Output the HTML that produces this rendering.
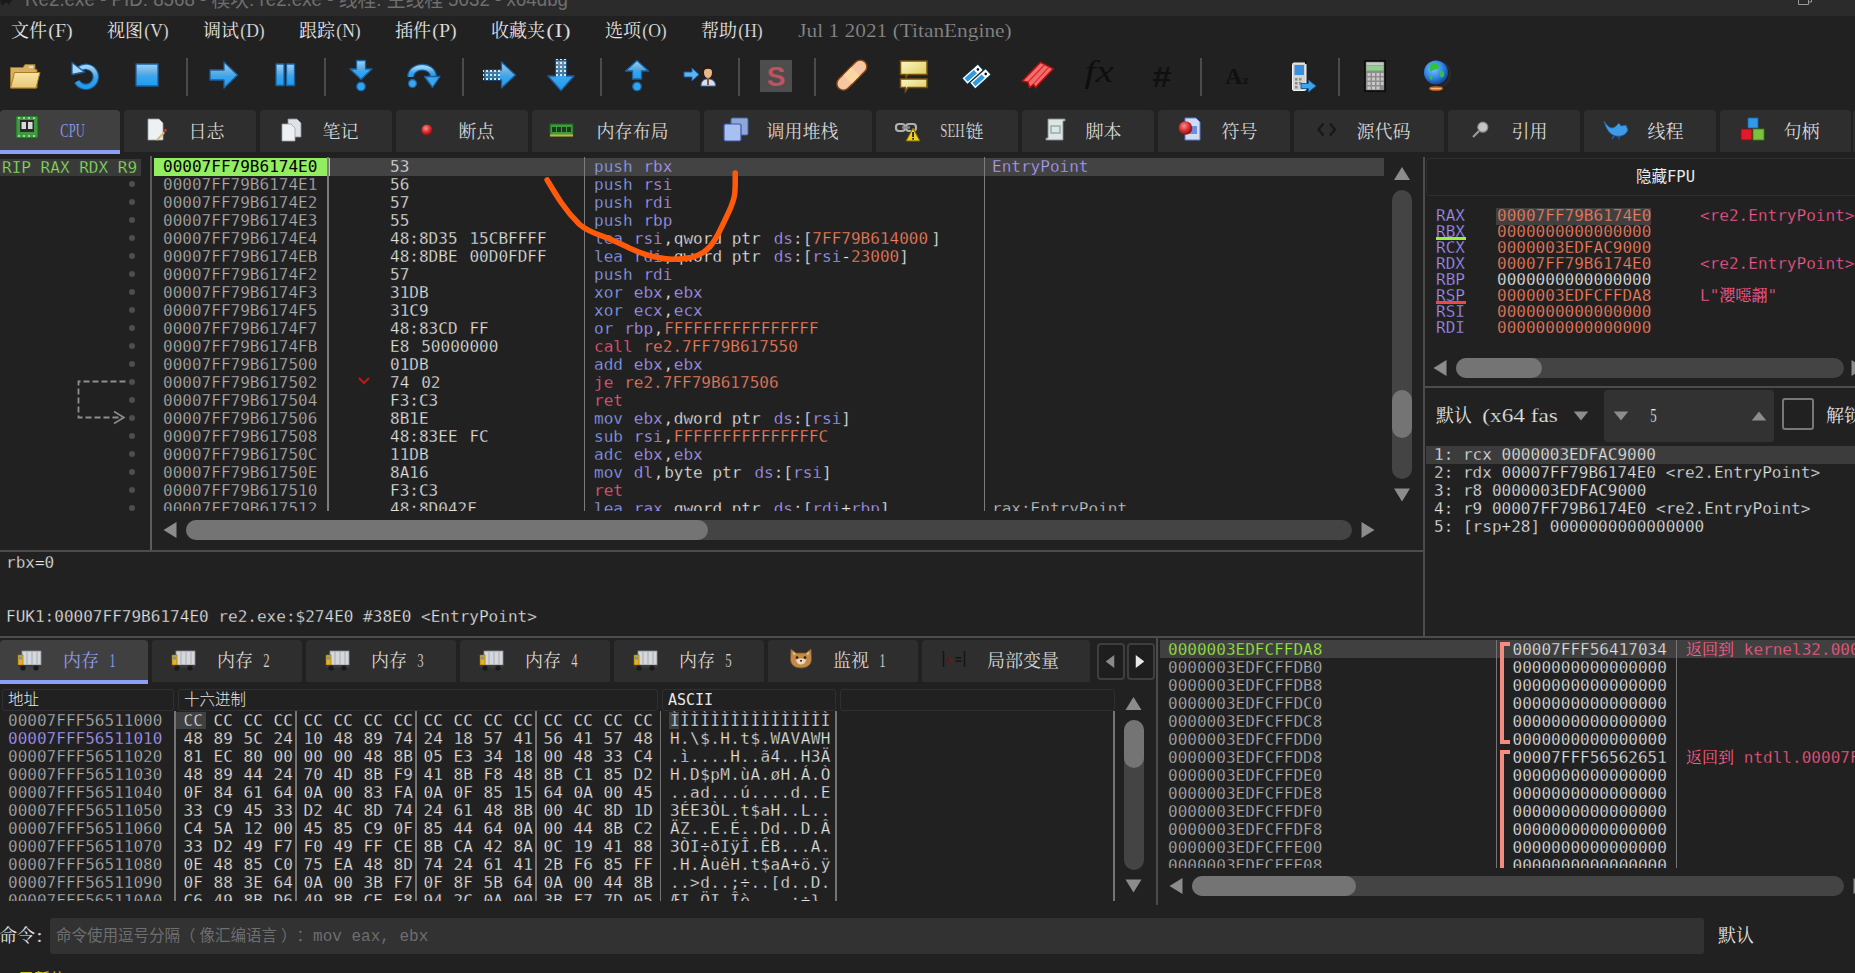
<!DOCTYPE html>
<html lang="zh"><head><meta charset="utf-8"><title>x64dbg</title>
<style>
*{box-sizing:border-box;margin:0;padding:0}
html,body{width:1855px;height:973px;overflow:hidden;background:#212121}
body{position:relative;font-family:"Liberation Sans","Noto Sans CJK SC",sans-serif;color:#e0e0e0}
.a{position:absolute}
.m{font-family:"DejaVu Sans Mono","Liberation Mono","Noto Serif CJK SC",monospace;font-size:16.05px;white-space:pre;line-height:18px;letter-spacing:0;margin-top:1px;-webkit-text-stroke:0.3px #212121}
.ui{font-family:"Liberation Serif","Noto Serif CJK SC",serif;font-size:18px;white-space:pre}
.ui i{font-style:normal;font-family:"Liberation Mono",monospace;font-size:15px;display:inline-block;transform:scaleY(1.12);transform-origin:50% 70%}
.tab{position:absolute;top:110px;height:42px;background:#2e2e2e;border-radius:4px 4px 0 0}
.tab .t{position:absolute;top:9px;color:#d6d6d6}
.tab.sel{background:#404040;border-bottom:4px solid #8c9ef5;height:44px}
.tab.sel .t{color:#8c9ef5}
.row{position:absolute;left:0;height:18px}
.vl{position:absolute;width:2px;background:#6c6c6c}
.hl{position:absolute;height:2px;background:#4c4c4c}
.mn{color:#90a3fc}.rg{color:#b09efc}.im{color:#f88060}.cj{color:#f85c80}.wh{color:#ececec}
.gr{color:#a6a6a6}.mn,.cj{margin-right:1.200px}.cm{color:#ececec;margin:0 0.700px}
.trk{position:absolute;background:#444;border-radius:10px}
.thb{position:absolute;background:#747474;border-radius:10px}
.hdr{position:absolute;top:689px;height:22px;border:1px solid #2f2f33;border-radius:3px;font-size:15.5px;line-height:19px;padding-left:5px;color:#e8e8e8;white-space:pre;font-weight:300}
</style></head><body>

<div class="a" style="left:0;top:0;width:1855px;height:16px;background:#2b2b2b;overflow:hidden">
<div class="a" style="left:25px;top:-13px;font-size:21px;line-height:24px;transform:scaleX(0.893);transform-origin:0 0;color:#6f6f6f;white-space:pre;font-family:'Liberation Sans','Noto Sans CJK SC',sans-serif">Re2.exe - PID: 8568 - 模块: re2.exe - 线程: 主线程 5032 - x64dbg</div>
<svg class="a" style="left:0;top:0" width="16" height="8"><path d="M0 0 L12 0 L9 5 L6 2 L2 6 Z" fill="#1a1a1a"/></svg>
<svg class="a" style="left:1797px;top:0" width="16" height="8"><path d="M1.5 0 V4.5 H11.5 V0 M11.5 2 H14.5 V0" fill="none" stroke="#9a9a9a" stroke-width="1"/></svg>
</div>
<div class="a" style="left:11px;top:17px;height:26px;width:65.0px;"><div class="a ui" style="left:0px;top:1px;line-height:26px;color:#e4e4e4;font-size:18px">文件</div><svg class="a" style="left:36.0px;top:0;overflow:visible" width="27.0" height="26"><text x="1.300" y="19.5" textLength="24.4" lengthAdjust="spacingAndGlyphs" font-family="Liberation Serif,serif" font-size="18" fill="#e4e4e4" stroke="#212121" stroke-width="0.18" xml:space="preserve">(F)</text></svg></div>
<div class="a" style="left:107px;top:17px;height:26px;width:65.0px;"><div class="a ui" style="left:0px;top:1px;line-height:26px;color:#e4e4e4;font-size:18px">视图</div><svg class="a" style="left:36.0px;top:0;overflow:visible" width="27.0" height="26"><text x="1.300" y="19.5" textLength="24.4" lengthAdjust="spacingAndGlyphs" font-family="Liberation Serif,serif" font-size="18" fill="#e4e4e4" stroke="#212121" stroke-width="0.18" xml:space="preserve">(V)</text></svg></div>
<div class="a" style="left:203px;top:17px;height:26px;width:65.0px;"><div class="a ui" style="left:0px;top:1px;line-height:26px;color:#e4e4e4;font-size:18px">调试</div><svg class="a" style="left:36.0px;top:0;overflow:visible" width="27.0" height="26"><text x="1.300" y="19.5" textLength="24.4" lengthAdjust="spacingAndGlyphs" font-family="Liberation Serif,serif" font-size="18" fill="#e4e4e4" stroke="#212121" stroke-width="0.18" xml:space="preserve">(D)</text></svg></div>
<div class="a" style="left:299px;top:17px;height:26px;width:65.0px;"><div class="a ui" style="left:0px;top:1px;line-height:26px;color:#e4e4e4;font-size:18px">跟踪</div><svg class="a" style="left:36.0px;top:0;overflow:visible" width="27.0" height="26"><text x="1.300" y="19.5" textLength="24.4" lengthAdjust="spacingAndGlyphs" font-family="Liberation Serif,serif" font-size="18" fill="#e4e4e4" stroke="#212121" stroke-width="0.18" xml:space="preserve">(N)</text></svg></div>
<div class="a" style="left:395px;top:17px;height:26px;width:65.0px;"><div class="a ui" style="left:0px;top:1px;line-height:26px;color:#e4e4e4;font-size:18px">插件</div><svg class="a" style="left:36.0px;top:0;overflow:visible" width="27.0" height="26"><text x="1.300" y="19.5" textLength="24.4" lengthAdjust="spacingAndGlyphs" font-family="Liberation Serif,serif" font-size="18" fill="#e4e4e4" stroke="#212121" stroke-width="0.18" xml:space="preserve">(P)</text></svg></div>
<div class="a" style="left:491px;top:17px;height:26px;width:83.0px;"><div class="a ui" style="left:0px;top:1px;line-height:26px;color:#e4e4e4;font-size:18px">收藏夹</div><svg class="a" style="left:54.0px;top:0;overflow:visible" width="27.0" height="26"><text x="1.300" y="19.5" textLength="24.4" lengthAdjust="spacingAndGlyphs" font-family="Liberation Serif,serif" font-size="18" fill="#e4e4e4" stroke="#212121" stroke-width="0.18" xml:space="preserve">(I)</text></svg></div>
<div class="a" style="left:605px;top:17px;height:26px;width:65.0px;"><div class="a ui" style="left:0px;top:1px;line-height:26px;color:#e4e4e4;font-size:18px">选项</div><svg class="a" style="left:36.0px;top:0;overflow:visible" width="27.0" height="26"><text x="1.300" y="19.5" textLength="24.4" lengthAdjust="spacingAndGlyphs" font-family="Liberation Serif,serif" font-size="18" fill="#e4e4e4" stroke="#212121" stroke-width="0.18" xml:space="preserve">(O)</text></svg></div>
<div class="a" style="left:701px;top:17px;height:26px;width:65.0px;"><div class="a ui" style="left:0px;top:1px;line-height:26px;color:#e4e4e4;font-size:18px">帮助</div><svg class="a" style="left:36.0px;top:0;overflow:visible" width="27.0" height="26"><text x="1.300" y="19.5" textLength="24.4" lengthAdjust="spacingAndGlyphs" font-family="Liberation Serif,serif" font-size="18" fill="#e4e4e4" stroke="#212121" stroke-width="0.18" xml:space="preserve">(H)</text></svg></div>
<div class="a" style="left:797px;top:17px;height:26px;width:218.0px;"><svg class="a" style="left:0.0px;top:0;overflow:visible" width="216.0" height="26"><text x="1.300" y="19.5" textLength="213.4" lengthAdjust="spacingAndGlyphs" font-family="Liberation Serif,serif" font-size="18" fill="#8a8a8a" stroke="#212121" stroke-width="0.18" xml:space="preserve">Jul 1 2021 (TitanEngine)</text></svg></div>
<svg width="0" height="0" style="position:absolute"><defs>
<linearGradient id="gb" x1="0" y1="0" x2="0" y2="1"><stop offset="0" stop-color="#9ad2f7"/><stop offset="0.45" stop-color="#5aa9e0"/><stop offset="0.55" stop-color="#3aa6ee"/><stop offset="1" stop-color="#1e9cf0"/></linearGradient>
<linearGradient id="gf" x1="0" y1="0" x2="0" y2="1"><stop offset="0" stop-color="#f8e3a4"/><stop offset="1" stop-color="#e8c878"/></linearGradient>
<linearGradient id="gy" x1="0" y1="0" x2="1" y2="1"><stop offset="0" stop-color="#fbf6c8"/><stop offset="1" stop-color="#dccb55"/></linearGradient>
<radialGradient id="gg" cx="0.4" cy="0.35" r="0.7"><stop offset="0" stop-color="#7fc4ff"/><stop offset="0.6" stop-color="#2a7fe0"/><stop offset="1" stop-color="#123a8a"/></radialGradient>
<radialGradient id="gr" cx="0.4" cy="0.35" r="0.7"><stop offset="0" stop-color="#f89090"/><stop offset="0.55" stop-color="#d42a2a"/><stop offset="1" stop-color="#7a0808"/></radialGradient>
<pattern id="dots" width="4" height="4" patternUnits="userSpaceOnUse"><rect x="1" y="1" width="2" height="2" fill="#cfe9fb"/></pattern>
</defs></svg>
<svg class="a" style="left:6px;top:57px;overflow:visible" width="36" height="36"><path d="M4.5 31 V10.5 H17 L19 7.5 H29 V12.5 H31 V31 Z" fill="#d8b060" stroke="#9a7326" stroke-width="1"/><path d="M4.5 31 L8.5 15.5 H34 L30 31 Z" fill="url(#gf)" stroke="#a67c2a" stroke-width="1"/><rect x="23" y="9" width="4" height="2" fill="#bfe6ff"/></svg>
<svg class="a" style="left:67px;top:57px;overflow:visible" width="36" height="36"><path d="M12.5 12 A10 10 0 1 1 10 24.500" fill="none" stroke="#1b5f9e" stroke-width="6.5"/><path d="M12.5 12 A10 10 0 1 1 10 24.500" fill="none" stroke="url(#gb)" stroke-width="4.2"/><path d="M5 5.5 L5 17.5 L17.5 15 Z" fill="#a8d8f8" stroke="#1b5f9e" stroke-width="1.3" stroke-linejoin="round"/></svg>
<svg class="a" style="left:129px;top:57px;overflow:visible" width="36" height="36"><rect x="7" y="7" width="22" height="22" fill="url(#gb)" stroke="#1b5f9e" stroke-width="1.3" stroke-linejoin="round"/></svg>
<div class="a" style="left:186px;top:58px;width:2px;height:38px;background:#4b4b4b"></div>
<svg class="a" style="left:205px;top:57px;overflow:visible" width="36" height="36"><path d="M5 13 H19 V5 L32.5 18 L19 31 V23 H5 Z" fill="url(#gb)" stroke="#1b5f9e" stroke-width="1.3" stroke-linejoin="round"/></svg>
<svg class="a" style="left:267px;top:57px;overflow:visible" width="36" height="36"><rect x="9" y="7" width="8" height="21.5" fill="url(#gb)" stroke="#1b5f9e" stroke-width="1.3" stroke-linejoin="round"/><rect x="19.5" y="7" width="8" height="21.5" fill="url(#gb)" stroke="#1b5f9e" stroke-width="1.3" stroke-linejoin="round"/></svg>
<div class="a" style="left:324px;top:58px;width:2px;height:38px;background:#4b4b4b"></div>
<svg class="a" style="left:343px;top:57px;overflow:visible" width="36" height="36"><path d="M13.5 3.5 H22.5 V12 H29 L18 22.5 L7 12 H13.5 Z" fill="url(#gb)" stroke="#1b5f9e" stroke-width="1.3" stroke-linejoin="round"/><circle cx="18" cy="29.5" r="4.3" fill="#2fa4f0" stroke="#1b5f9e" stroke-width="1.3" stroke-linejoin="round"/></svg>
<svg class="a" style="left:406px;top:57px;overflow:visible" width="36" height="36"><path d="M4.5 20 C5 7.5 27 6.5 27.5 20" fill="none" stroke="#1b5f9e" stroke-width="7"/><path d="M4.5 20 C5 7.5 27 6.5 27.5 20" fill="none" stroke="url(#gb)" stroke-width="4.6"/><path d="M18.5 19.5 H34 L26.5 30.5 Z" fill="#3aa6ee" stroke="#1b5f9e" stroke-width="1.3" stroke-linejoin="round"/><circle cx="6.5" cy="26.5" r="4" fill="#3aa6ee" stroke="#1b5f9e" stroke-width="1.3" stroke-linejoin="round"/></svg>
<div class="a" style="left:462px;top:58px;width:2px;height:38px;background:#4b4b4b"></div>
<svg class="a" style="left:481px;top:57px;overflow:visible" width="36" height="36"><path d="M3 13 H20.5 V5 L34.5 18 L20.5 31 V23 H3 Z" fill="url(#gb)" stroke="#1b5f9e" stroke-width="1.3" stroke-linejoin="round"/><rect x="2" y="11" width="17" height="14" fill="#212121" opacity="0.35"/><rect x="2" y="11" width="18" height="14" fill="url(#dots)"/></svg>
<svg class="a" style="left:543px;top:57px;overflow:visible" width="36" height="36"><path d="M12.5 3 H23.5 V19 H31 L18 33.5 L5 19 H12.5 Z" fill="url(#gb)" stroke="#1b5f9e" stroke-width="1.3" stroke-linejoin="round"/><rect x="11" y="2" width="14" height="17" fill="#212121" opacity="0.35"/><rect x="11" y="2" width="14" height="18" fill="url(#dots)"/></svg>
<div class="a" style="left:600px;top:58px;width:2px;height:38px;background:#4b4b4b"></div>
<svg class="a" style="left:619px;top:57px;overflow:visible" width="36" height="36"><path d="M18 3.5 L29.5 14 H22.5 V22 H13.5 V14 H6.5 Z" fill="url(#gb)" stroke="#1b5f9e" stroke-width="1.3" stroke-linejoin="round"/><circle cx="18" cy="29.5" r="4.3" fill="#2fa4f0" stroke="#1b5f9e" stroke-width="1.3" stroke-linejoin="round"/></svg>
<svg class="a" style="left:681px;top:57px;overflow:visible" width="36" height="36"><path d="M3 15 H11 V11 L18 17.5 L11 24 V20 H3 Z" fill="#5cb4f0" stroke="#1b5f9e" stroke-width="1"/><path d="M20 29 C20 23 24 22 27 22 C30 22 34.5 23 34.5 29 Z" fill="#cfe2f5" stroke="#3a6aa8" stroke-width="1"/><ellipse cx="27" cy="15.5" rx="4" ry="5.5" fill="#e9b98c"/><path d="M22.5 14 C22.5 7 31.5 7 31.5 14 C30 11 24 11 22.5 14 Z" fill="#2a1a10"/><rect x="26" y="21" width="2" height="7" fill="#a0522d"/></svg>
<div class="a" style="left:738px;top:58px;width:2px;height:38px;background:#4b4b4b"></div>
<svg class="a" style="left:757px;top:57px;overflow:visible" width="36" height="36"><rect x="3" y="3" width="32" height="32" fill="#4d4d4d"/><text x="19" y="29" text-anchor="middle" font-family="Liberation Sans,sans-serif" font-weight="bold" font-size="28" fill="#c0525e">S</text></svg>
<div class="a" style="left:814px;top:58px;width:2px;height:38px;background:#4b4b4b"></div>
<svg class="a" style="left:833px;top:57px;overflow:visible" width="36" height="36"><g transform="rotate(-45 18.5 18.5)"><rect x="0.5" y="12" width="37" height="13" rx="6.5" fill="#f4c6a2" stroke="#8a4616" stroke-width="1.4"/><rect x="13" y="12.5" width="11" height="12" fill="#f8d8a0" opacity="0.9"/></g></svg>
<svg class="a" style="left:895px;top:57px;overflow:visible" width="36" height="36"><path d="M5.5 4 H32 V17.5 H13 L11 20 V17.5 H5.5 Z" fill="url(#gy)" stroke="#7a5210" stroke-width="1.5"/><path d="M5.5 22 H32 V30.5 H13 L10.5 34.5 V30.5 H5.5 Z" fill="url(#gy)" stroke="#7a5210" stroke-width="1.5"/></svg>
<svg class="a" style="left:959px;top:57px;overflow:visible" width="36" height="36"><g transform="translate(5.800,24.200) rotate(-42)"><rect x="-0.700" y="-4.700" width="22.400" height="9.400" fill="#12303c"/><rect x="0.300" y="-3.600" width="20.400" height="7.200" fill="#fafdff"/><rect x="1.800" y="-2.300" width="12.500" height="4.600" fill="#2d9ae2"/><circle cx="17.600" cy="0" r="1.300" fill="#0a0a0a"/></g><g transform="translate(13.600,28.700) rotate(-42)"><rect x="-0.700" y="-4.700" width="22.400" height="9.400" fill="#12303c"/><rect x="0.300" y="-3.600" width="20.400" height="7.200" fill="#fafdff"/><rect x="1.800" y="-2.300" width="12.500" height="4.600" fill="#2d9ae2"/><circle cx="17.600" cy="0" r="1.300" fill="#0a0a0a"/></g></svg>
<svg class="a" style="left:1020px;top:57px;overflow:visible" width="36" height="36"><path d="M20.600 5.300 L33.300 11.800 L17.500 28.300 L15.600 30.800 L13.600 27.300 L9.400 30.800 L8.200 25.300 L2.300 24 Z" fill="#f26c6c" stroke="#b40e0e" stroke-width="1.500" stroke-linejoin="round"/><path d="M24.900 7.500 L8 25 M29.200 9.600 L13.500 27" stroke="#dc2626" stroke-width="1.100"/></svg>
<svg class="a" style="left:1081px;top:57px;overflow:visible" width="36" height="36"><text x="3.500" y="24.500" font-family="Liberation Serif,serif" font-style="italic" font-size="31" textLength="29" lengthAdjust="spacingAndGlyphs" fill="#0e0e0e">fx</text></svg>
<svg class="a" style="left:1143px;top:57px;overflow:visible" width="36" height="36"><text x="9" y="29.500" font-family="Liberation Sans,sans-serif" font-style="italic" font-weight="bold" font-size="30" textLength="19" lengthAdjust="spacingAndGlyphs" fill="#101010">#</text></svg>
<div class="a" style="left:1200px;top:58px;width:2px;height:38px;background:#4b4b4b"></div>
<svg class="a" style="left:1220px;top:57px;overflow:visible" width="36" height="36"><text x="5" y="27" font-family="Liberation Serif,serif" font-weight="bold" font-size="24" fill="#101010">A</text><text x="23" y="27" font-family="Liberation Serif,serif" font-weight="bold" font-size="12" fill="#101010">z</text></svg>
<svg class="a" style="left:1285px;top:57px;overflow:visible" width="36" height="36"><rect x="7.5" y="6" width="13.5" height="27.5" rx="1.5" fill="#d4d4d4" stroke="#f4f4f4" stroke-width="1"/><rect x="9.5" y="8" width="9.5" height="10" fill="#3a8ee0"/><rect x="20" y="3" width="1.5" height="4" fill="#111"/><g fill="#8a8a8a"><rect x="10" y="21" width="2.5" height="2.5"/><rect x="14" y="21" width="2.5" height="2.5"/><rect x="10" y="25" width="2.5" height="2.5"/><rect x="14" y="25" width="2.5" height="2.5"/><rect x="10" y="29" width="2.5" height="2.5"/></g><path d="M16 26.5 H23.5 V23 L31 29 L23.5 35 V31.5 H16 Z" fill="#3aa6ee" stroke="#1b5f9e" stroke-width="1"/></svg>
<div class="a" style="left:1338px;top:58px;width:2px;height:38px;background:#4b4b4b"></div>
<svg class="a" style="left:1357px;top:57px;overflow:visible" width="36" height="36"><rect x="8" y="4" width="20" height="30" fill="#8c8c8c" stroke="#080808" stroke-width="1.6"/><rect x="9.5" y="5.5" width="17" height="2.5" fill="#c8c8c8"/><rect x="9.5" y="8.5" width="17" height="5" fill="#8fd08f"/><g fill="#c9c9c9"><rect x="10.5" y="16" width="3" height="3"/><rect x="15" y="16" width="3" height="3"/><rect x="19.5" y="16" width="3" height="3"/><rect x="24" y="16" width="2.5" height="3"/><rect x="10.5" y="20.5" width="3" height="3"/><rect x="15" y="20.5" width="3" height="3"/><rect x="19.5" y="20.5" width="3" height="3"/><rect x="24" y="20.5" width="2.5" height="3"/><rect x="10.5" y="25" width="3" height="3"/><rect x="15" y="25" width="3" height="3"/><rect x="19.5" y="25" width="3" height="3"/><rect x="24" y="25" width="2.5" height="3"/><rect x="10.5" y="29.5" width="3" height="3"/><rect x="15" y="29.5" width="3" height="3"/><rect x="19.5" y="29.5" width="3" height="3"/></g></svg>
<svg class="a" style="left:1418px;top:57px;overflow:visible" width="36" height="36"><path d="M27 6 A14 14 0 0 1 22 30" fill="none" stroke="#2c2c2c" stroke-width="2"/><circle cx="18" cy="15.5" r="12" fill="url(#gg)"/><path d="M14 6 C18 5 22 8 21 11 C19 13 15 12 13 15 C11 13 11 8 14 6 Z M22 14 C25 13 27 16 26 19 C24 22 21 20 22 14 Z M12 18 C14 18 15 21 14 23 C12 23 11 20 12 18Z" fill="#2fc24a"/><ellipse cx="18" cy="31.5" rx="7" ry="2.3" fill="#d86a1c"/><rect x="13" y="31" width="10" height="1.2" fill="#f6b37a"/></svg>
<div class="tab sel" style="left:0px;width:120px">
<svg class="a" style="left:16px;top:6px;overflow:visible" width="24" height="24"><rect x="0" y="0" width="22" height="22" fill="#3f9a3f" stroke="#1e5a1e" stroke-width="1"/><rect x="4" y="4" width="14" height="12" fill="#2a2a2a"/><rect x="5.5" y="6" width="4.5" height="7" fill="#d8d8d8"/><rect x="12" y="6" width="4.5" height="7" fill="#d8d8d8"/><g fill="#9fd09f"><rect x="2" y="1" width="2" height="2"/><rect x="7" y="1" width="2" height="2"/><rect x="12" y="1" width="2" height="2"/><rect x="17" y="1" width="2" height="2"/><rect x="2" y="19" width="2" height="2"/><rect x="7" y="19" width="2" height="2"/><rect x="12" y="19" width="2" height="2"/><rect x="17" y="19" width="2" height="2"/></g></svg>
<div class="a" style="left:58.5px;top:7px;height:26px;width:29.0px;"><svg class="a" style="left:0.0px;top:0;overflow:visible" width="27.0" height="26"><text x="1.300" y="19.5" textLength="24.4" lengthAdjust="spacingAndGlyphs" font-family="Liberation Serif,serif" font-size="18" fill="#8c9ef5" stroke="#404040" stroke-width="0.18" xml:space="preserve">CPU</text></svg></div>
</div>
<div class="tab" style="left:124px;width:132px">
<svg class="a" style="left:23px;top:8px;overflow:visible" width="24" height="24"><path d="M1 1 H12 L16 5 V22 H1 Z" fill="#eef1f4" stroke="#9aa0a8" stroke-width="0.8"/><path d="M10 20.500 L16.500 13.500 L18 15 L11.500 22 L9.500 22.500 Z" fill="#d8c060"/><rect x="17" y="11" width="2.600" height="2.600" fill="#c83838" transform="rotate(45 18.300 12.300)"/></svg>
<div class="a" style="left:64.5px;top:7px;height:26px;width:38px;"><div class="a ui" style="left:0px;top:2px;line-height:26px;color:#d6d6d6;font-size:18px">日志</div></div>
</div>
<div class="tab" style="left:260px;width:132px">
<svg class="a" style="left:21px;top:8px;overflow:visible" width="24" height="24"><path d="M7 1 H16 L20 5 V19 H7 Z" fill="#dfe3e8" stroke="#8a8f98" stroke-width="0.8"/><path d="M1 6 H10 L14 10 V23 H1 Z" fill="#eef1f4" stroke="#9aa0a8" stroke-width="0.8"/></svg>
<div class="a" style="left:62.5px;top:7px;height:26px;width:38px;"><div class="a ui" style="left:0px;top:2px;line-height:26px;color:#d6d6d6;font-size:18px">笔记</div></div>
</div>
<div class="tab" style="left:396px;width:132px">
<svg class="a" style="left:25px;top:14px;overflow:visible" width="24" height="24"><circle cx="6" cy="6" r="5.5" fill="url(#gr)"/></svg>
<div class="a" style="left:62.5px;top:7px;height:26px;width:38px;"><div class="a ui" style="left:0px;top:2px;line-height:26px;color:#d6d6d6;font-size:18px">断点</div></div>
</div>
<div class="tab" style="left:532px;width:168px">
<svg class="a" style="left:18px;top:14px;overflow:visible" width="24" height="24"><rect x="0" y="0" width="23" height="12" fill="#3d9a3d" stroke="#1f5f1f" stroke-width="1"/><g fill="#1c3a1c"><rect x="2" y="3" width="4" height="5"/><rect x="7" y="3" width="4" height="5"/><rect x="12" y="3" width="4" height="5"/><rect x="17" y="3" width="4" height="5"/></g><rect x="0" y="10.5" width="23" height="2" fill="#c8b040"/></svg>
<div class="a" style="left:64.5px;top:7px;height:26px;width:74px;"><div class="a ui" style="left:0px;top:2px;line-height:26px;color:#d6d6d6;font-size:18px">内存布局</div></div>
</div>
<div class="tab" style="left:704px;width:168px">
<svg class="a" style="left:20px;top:8px;overflow:visible" width="24" height="24"><rect x="7" y="0" width="17" height="17" rx="1.5" fill="#8fa8d8" stroke="#4a62a8" stroke-width="1"/><rect x="0" y="6" width="17" height="17" rx="1.5" fill="#a8c0ee" stroke="#3a52b0" stroke-width="1.2"/></svg>
<div class="a" style="left:62.5px;top:7px;height:26px;width:74px;"><div class="a ui" style="left:0px;top:2px;line-height:26px;color:#d6d6d6;font-size:18px">调用堆栈</div></div>
</div>
<div class="tab" style="left:876px;width:142px">
<svg class="a" style="left:20px;top:12px;overflow:visible" width="24" height="24"><rect x="0" y="2" width="9" height="7" rx="3" fill="none" stroke="#b0b0b0" stroke-width="2.2"/><rect x="10" y="2" width="10" height="7" rx="3" fill="none" stroke="#b0b0b0" stroke-width="2.2"/><rect x="6" y="4.3" width="8" height="2.4" fill="#8a8a8a"/><path d="M17 6 L24 19 H10 Z" fill="#f0d020" stroke="#7a6500" stroke-width="1"/><rect x="16.2" y="10" width="1.8" height="5" fill="#222"/><rect x="16.2" y="16" width="1.8" height="1.6" fill="#222"/></svg>
<div class="a" style="left:62.5px;top:7px;height:26px;width:47.0px;"><svg class="a" style="left:0.0px;top:0;overflow:visible" width="27.0" height="26"><text x="1.300" y="19.5" textLength="24.4" lengthAdjust="spacingAndGlyphs" font-family="Liberation Serif,serif" font-size="18" fill="#d6d6d6" stroke="#2e2e2e" stroke-width="0.18" xml:space="preserve">SEH</text></svg><div class="a ui" style="left:27.0px;top:2px;line-height:26px;color:#d6d6d6;font-size:18px">链</div></div>
</div>
<div class="tab" style="left:1022px;width:132px">
<svg class="a" style="left:23px;top:8px;overflow:visible" width="24" height="24"><path d="M3 1 H20 V3 H18 V22 H1 V20 H3 Z" fill="#dde6e4" stroke="#7a8a88" stroke-width="0.9"/><rect x="6" y="8" width="9" height="7" fill="none" stroke="#9aa" stroke-width="1.5"/></svg>
<div class="a" style="left:63.5px;top:7px;height:26px;width:38px;"><div class="a ui" style="left:0px;top:2px;line-height:26px;color:#d6d6d6;font-size:18px">脚本</div></div>
</div>
<div class="tab" style="left:1158px;width:132px">
<svg class="a" style="left:20px;top:7px;overflow:visible" width="24" height="24"><path d="M7 1 H18 L22 5 V23 H7 Z" fill="#cfdcf4" stroke="#5a7ad0" stroke-width="1"/><rect x="11" y="9" width="8" height="8" fill="#6a8ee0"/><circle cx="7.500" cy="11" r="6.800" fill="url(#gr)"/></svg>
<div class="a" style="left:63.5px;top:7px;height:26px;width:38px;"><div class="a ui" style="left:0px;top:2px;line-height:26px;color:#d6d6d6;font-size:18px">符号</div></div>
</div>
<div class="tab" style="left:1294px;width:150px">
<svg class="a" style="left:23px;top:11px;overflow:visible" width="24" height="24"><path d="M6.500 2.500 L1.500 8.500 L6.500 14.500 M13 2.500 L18 8.500 L13 14.500" fill="none" stroke="#181818" stroke-width="2.200"/></svg>
<div class="a" style="left:62.5px;top:7px;height:26px;width:56px;"><div class="a ui" style="left:0px;top:2px;line-height:26px;color:#d6d6d6;font-size:18px">源代码</div></div>
</div>
<div class="tab" style="left:1448px;width:132px">
<svg class="a" style="left:24px;top:12px;overflow:visible" width="24" height="24"><line x1="1" y1="15" x2="7" y2="9" stroke="#9a9a9a" stroke-width="2.200"/><circle cx="10.800" cy="5.200" r="5" fill="#c4c4c4" stroke="#8a8a8a" stroke-width="1.200"/></svg>
<div class="a" style="left:63.5px;top:7px;height:26px;width:38px;"><div class="a ui" style="left:0px;top:2px;line-height:26px;color:#d6d6d6;font-size:18px">引用</div></div>
</div>
<div class="tab" style="left:1584px;width:132px">
<svg class="a" style="left:20px;top:10px;overflow:visible" width="24" height="24"><path d="M0 1 C5 9 9 9 12 6 L15 3 L17 6 L22 5 L24 10 C22 15 17 17 12 16 C6 15 2 9 0 1 Z" fill="#3e9be8" stroke="#1c5fa8" stroke-width="0.8"/><path d="M10 16 L8 19 M15 16 L15 19" stroke="#1c5fa8" stroke-width="1.5"/></svg>
<div class="a" style="left:63.5px;top:7px;height:26px;width:38px;"><div class="a ui" style="left:0px;top:2px;line-height:26px;color:#d6d6d6;font-size:18px">线程</div></div>
</div>
<div class="tab" style="left:1720px;width:131px">
<svg class="a" style="left:20px;top:8px;overflow:visible" width="24" height="24"><rect x="8" y="0" width="10" height="10" fill="#2f9be8" stroke="#1a5fa8" stroke-width="0.8"/><rect x="1" y="11" width="11" height="11" fill="#e01a2a" stroke="#8a0a12" stroke-width="0.8"/><rect x="13" y="11" width="11" height="11" fill="#7ac23a" stroke="#3f7a12" stroke-width="0.8"/></svg>
<div class="a" style="left:63.5px;top:7px;height:26px;width:38px;"><div class="a ui" style="left:0px;top:2px;line-height:26px;color:#d6d6d6;font-size:18px">句柄</div></div>
</div>
<div class="tab" style="left:1853px;width:40px">
</div>
<div class="a m" style="left:0;top:158px;width:141px;height:17px;background:#3a3a3a;color:#86e05c;line-height:17px;padding-left:2px;overflow:hidden;-webkit-text-stroke-color:#3a3a3a">RIP RAX RDX R9</div>
<div class="a" style="left:129px;top:181px;width:6px;height:6px;overflow:hidden"><div style="width:6px;height:6px;border-radius:3px;background:#4e4e4e"></div></div>
<div class="a" style="left:129px;top:199px;width:6px;height:6px;overflow:hidden"><div style="width:6px;height:6px;border-radius:3px;background:#4e4e4e"></div></div>
<div class="a" style="left:129px;top:217px;width:6px;height:6px;overflow:hidden"><div style="width:6px;height:6px;border-radius:3px;background:#4e4e4e"></div></div>
<div class="a" style="left:129px;top:235px;width:6px;height:6px;overflow:hidden"><div style="width:6px;height:6px;border-radius:3px;background:#4e4e4e"></div></div>
<div class="a" style="left:129px;top:253px;width:6px;height:6px;overflow:hidden"><div style="width:6px;height:6px;border-radius:3px;background:#4e4e4e"></div></div>
<div class="a" style="left:129px;top:271px;width:6px;height:6px;overflow:hidden"><div style="width:6px;height:6px;border-radius:3px;background:#4e4e4e"></div></div>
<div class="a" style="left:129px;top:289px;width:6px;height:6px;overflow:hidden"><div style="width:6px;height:6px;border-radius:3px;background:#4e4e4e"></div></div>
<div class="a" style="left:129px;top:307px;width:6px;height:6px;overflow:hidden"><div style="width:6px;height:6px;border-radius:3px;background:#4e4e4e"></div></div>
<div class="a" style="left:129px;top:325px;width:6px;height:6px;overflow:hidden"><div style="width:6px;height:6px;border-radius:3px;background:#4e4e4e"></div></div>
<div class="a" style="left:129px;top:343px;width:6px;height:6px;overflow:hidden"><div style="width:6px;height:6px;border-radius:3px;background:#4e4e4e"></div></div>
<div class="a" style="left:129px;top:361px;width:6px;height:6px;overflow:hidden"><div style="width:6px;height:6px;border-radius:3px;background:#4e4e4e"></div></div>
<div class="a" style="left:129px;top:379px;width:6px;height:6px;overflow:hidden"><div style="width:6px;height:6px;border-radius:3px;background:#4e4e4e"></div></div>
<div class="a" style="left:129px;top:397px;width:6px;height:6px;overflow:hidden"><div style="width:6px;height:6px;border-radius:3px;background:#4e4e4e"></div></div>
<div class="a" style="left:129px;top:415px;width:6px;height:6px;overflow:hidden"><div style="width:6px;height:6px;border-radius:3px;background:#4e4e4e"></div></div>
<div class="a" style="left:129px;top:433px;width:6px;height:6px;overflow:hidden"><div style="width:6px;height:6px;border-radius:3px;background:#4e4e4e"></div></div>
<div class="a" style="left:129px;top:451px;width:6px;height:6px;overflow:hidden"><div style="width:6px;height:6px;border-radius:3px;background:#4e4e4e"></div></div>
<div class="a" style="left:129px;top:469px;width:6px;height:6px;overflow:hidden"><div style="width:6px;height:6px;border-radius:3px;background:#4e4e4e"></div></div>
<div class="a" style="left:129px;top:487px;width:6px;height:6px;overflow:hidden"><div style="width:6px;height:6px;border-radius:3px;background:#4e4e4e"></div></div>
<div class="a" style="left:129px;top:505px;width:6px;height:6px;overflow:hidden"><div style="width:6px;height:6px;border-radius:3px;background:#4e4e4e"></div></div>
<svg class="a" style="left:70px;top:370px" width="60" height="60"><path d="M55.500 11.500 H8.500 V47.500 H52" fill="none" stroke="#8e8e8e" stroke-width="1.800" stroke-dasharray="6 3"/><path d="M44 41.500 L54 47.500 L44 53.500" fill="none" stroke="#8c8c8c" stroke-width="1.6"/></svg>
<div class="vl" style="left:150px;top:156px;height:394px;width:2px;background:#5c5c5c"></div>
<div class="a" style="left:153px;top:157px;width:1232px;height:354px;overflow:hidden">
<div class="a" style="left:175px;top:1px;width:1056px;height:18px;background:#434343"></div>
<div class="a" style="left:1px;top:1px;width:176px;height:18px;background:#92ee60"></div>
<div class="a m" style="left:10px;top:0px;color:#000;-webkit-text-stroke-width:0">00007FF79B6174E0</div>
<div class="a m" style="left:237px;top:0px;color:#e4e4e4;-webkit-text-stroke-color:#434343">53</div>
<div class="a m" style="left:441px;top:0px;-webkit-text-stroke-color:#434343"><span class="mn">push </span><span class="rg">rbx</span></div>
<div class="a m" style="left:839px;top:0px;-webkit-text-stroke-color:#434343"><span class="rg">EntryPoint</span></div>
<div class="a m" style="left:10px;top:18px;color:#b2b2b2">00007FF79B6174E1</div>
<div class="a m" style="left:237px;top:18px;color:#e4e4e4">56</div>
<div class="a m" style="left:441px;top:18px"><span class="mn">push </span><span class="rg">rsi</span></div>
<div class="a m" style="left:10px;top:36px;color:#b2b2b2">00007FF79B6174E2</div>
<div class="a m" style="left:237px;top:36px;color:#e4e4e4">57</div>
<div class="a m" style="left:441px;top:36px"><span class="mn">push </span><span class="rg">rdi</span></div>
<div class="a m" style="left:10px;top:54px;color:#b2b2b2">00007FF79B6174E3</div>
<div class="a m" style="left:237px;top:54px;color:#e4e4e4">55</div>
<div class="a m" style="left:441px;top:54px"><span class="mn">push </span><span class="rg">rbp</span></div>
<div class="a m" style="left:10px;top:72px;color:#b2b2b2">00007FF79B6174E4</div>
<div class="a m" style="left:237px;top:72px;color:#e4e4e4">48:8D35<span style="letter-spacing:2.200px"> </span>15CBFFFF</div>
<div class="a m" style="left:441px;top:72px"><span class="mn">lea </span><span class="rg">rsi</span><span class="cm">,</span><span class="wh">qword ptr </span><span class="rg" style="margin-left:3.400px">ds</span><span class="wh">:[</span><span class="im">7FF79B614000</span><span style="margin-left:3px"></span><span class="wh">]</span></div>
<div class="a m" style="left:10px;top:90px;color:#b2b2b2">00007FF79B6174EB</div>
<div class="a m" style="left:237px;top:90px;color:#e4e4e4">48:8DBE<span style="letter-spacing:2.200px"> </span>00D0FDFF</div>
<div class="a m" style="left:441px;top:90px"><span class="mn">lea </span><span class="rg">rdi</span><span class="cm">,</span><span class="wh">qword ptr </span><span class="rg" style="margin-left:3.400px">ds</span><span class="wh">:[</span><span class="rg">rsi</span><span class="wh">-</span><span class="im">23000</span><span class="wh">]</span></div>
<div class="a m" style="left:10px;top:108px;color:#b2b2b2">00007FF79B6174F2</div>
<div class="a m" style="left:237px;top:108px;color:#e4e4e4">57</div>
<div class="a m" style="left:441px;top:108px"><span class="mn">push </span><span class="rg">rdi</span></div>
<div class="a m" style="left:10px;top:126px;color:#b2b2b2">00007FF79B6174F3</div>
<div class="a m" style="left:237px;top:126px;color:#e4e4e4">31DB</div>
<div class="a m" style="left:441px;top:126px"><span class="mn">xor </span><span class="rg">ebx</span><span class="cm">,</span><span class="rg">ebx</span></div>
<div class="a m" style="left:10px;top:144px;color:#b2b2b2">00007FF79B6174F5</div>
<div class="a m" style="left:237px;top:144px;color:#e4e4e4">31C9</div>
<div class="a m" style="left:441px;top:144px"><span class="mn">xor </span><span class="rg">ecx</span><span class="cm">,</span><span class="rg">ecx</span></div>
<div class="a m" style="left:10px;top:162px;color:#b2b2b2">00007FF79B6174F7</div>
<div class="a m" style="left:237px;top:162px;color:#e4e4e4">48:83CD<span style="letter-spacing:2.200px"> </span>FF</div>
<div class="a m" style="left:441px;top:162px"><span class="mn">or </span><span class="rg">rbp</span><span class="cm">,</span><span class="im">FFFFFFFFFFFFFFFF</span></div>
<div class="a m" style="left:10px;top:180px;color:#b2b2b2">00007FF79B6174FB</div>
<div class="a m" style="left:237px;top:180px;color:#e4e4e4">E8<span style="letter-spacing:2.200px"> </span>50000000</div>
<div class="a m" style="left:441px;top:180px"><span class="cj">call </span><span class="im">re2.7FF79B617550</span></div>
<div class="a m" style="left:10px;top:198px;color:#b2b2b2">00007FF79B617500</div>
<div class="a m" style="left:237px;top:198px;color:#e4e4e4">01DB</div>
<div class="a m" style="left:441px;top:198px"><span class="mn">add </span><span class="rg">ebx</span><span class="cm">,</span><span class="rg">ebx</span></div>
<div class="a m" style="left:10px;top:216px;color:#b2b2b2">00007FF79B617502</div>
<div class="a m" style="left:237px;top:216px;color:#e4e4e4">74<span style="letter-spacing:2.200px"> </span>02</div>
<div class="a m" style="left:441px;top:216px"><span class="cj">je </span><span class="im">re2.7FF79B617506</span></div>
<div class="a m" style="left:10px;top:234px;color:#b2b2b2">00007FF79B617504</div>
<div class="a m" style="left:237px;top:234px;color:#e4e4e4">F3:C3</div>
<div class="a m" style="left:441px;top:234px"><span class="cj">ret</span></div>
<div class="a m" style="left:10px;top:252px;color:#b2b2b2">00007FF79B617506</div>
<div class="a m" style="left:237px;top:252px;color:#e4e4e4">8B1E</div>
<div class="a m" style="left:441px;top:252px"><span class="mn">mov </span><span class="rg">ebx</span><span class="cm">,</span><span class="wh">dword ptr </span><span class="rg" style="margin-left:3.400px">ds</span><span class="wh">:[</span><span class="rg">rsi</span><span class="wh">]</span></div>
<div class="a m" style="left:10px;top:270px;color:#b2b2b2">00007FF79B617508</div>
<div class="a m" style="left:237px;top:270px;color:#e4e4e4">48:83EE<span style="letter-spacing:2.200px"> </span>FC</div>
<div class="a m" style="left:441px;top:270px"><span class="mn">sub </span><span class="rg">rsi</span><span class="cm">,</span><span class="im">FFFFFFFFFFFFFFFC</span></div>
<div class="a m" style="left:10px;top:288px;color:#b2b2b2">00007FF79B61750C</div>
<div class="a m" style="left:237px;top:288px;color:#e4e4e4">11DB</div>
<div class="a m" style="left:441px;top:288px"><span class="mn">adc </span><span class="rg">ebx</span><span class="cm">,</span><span class="rg">ebx</span></div>
<div class="a m" style="left:10px;top:306px;color:#b2b2b2">00007FF79B61750E</div>
<div class="a m" style="left:237px;top:306px;color:#e4e4e4">8A16</div>
<div class="a m" style="left:441px;top:306px"><span class="mn">mov </span><span class="rg">dl</span><span class="cm">,</span><span class="wh">byte ptr </span><span class="rg" style="margin-left:3.400px">ds</span><span class="wh">:[</span><span class="rg">rsi</span><span class="wh">]</span></div>
<div class="a m" style="left:10px;top:324px;color:#b2b2b2">00007FF79B617510</div>
<div class="a m" style="left:237px;top:324px;color:#e4e4e4">F3:C3</div>
<div class="a m" style="left:441px;top:324px"><span class="cj">ret</span></div>
<div class="a m" style="left:10px;top:342px;color:#b2b2b2">00007FF79B617512</div>
<div class="a m" style="left:237px;top:342px;color:#e4e4e4">48:8D042F</div>
<div class="a m" style="left:441px;top:342px"><span class="mn">lea </span><span class="rg">rax</span><span class="cm">,</span><span class="wh">qword ptr </span><span class="rg" style="margin-left:3.400px">ds</span><span class="wh">:[</span><span class="rg">rdi</span><span class="wh">+</span><span class="rg">rbp</span><span class="wh">]</span></div>
<div class="a m" style="left:839px;top:342px"><span style="color:#c8c8c8">rax:EntryPoint</span></div>
<svg class="a" style="left:204px;top:218px" width="14" height="12"><path d="M2 3 L7 8 L12 3" fill="none" stroke="#c01818" stroke-width="2"/></svg>
<div class="vl" style="left:174.200px;top:0;height:354px;width:1.800px;background:#7c7c7c"></div>
<div class="vl" style="left:430.500px;top:0;height:354px;width:1.6px;background:#7c7c7c"></div>
<div class="vl" style="left:830.500px;top:0;height:354px;width:1.6px;background:#7c7c7c"></div>
</div>
<svg class="a" style="left:530px;top:160px" width="230" height="120"><path d="M17.100 19.800 C22 28 26 35 31 42.200 C37 51 43 58 49.600 64.500 C57 71 66 74 74.400 76.900 C83 80 91 84 99.200 88 C107 91.500 115 95 124 96.700 C130 98 136 99.200 142.600 99.200 C151 99.200 160 98.500 167.400 95.500 C172 93.500 176 91 179.800 86.800 C184 82 188 75 191 68.200 C194.500 61 198 54 200.900 47.100 C202.500 43 204 39 204.600 34.700 C205.500 28 205.200 20 205.200 13" fill="none" stroke="#ff5a0c" stroke-width="5.5" stroke-linecap="round" stroke-linejoin="round"/></svg>
<svg class="a" style="left:0;top:0;pointer-events:none" width="1855" height="973">
<polygon points="1394.0,180.0 1410.0,180.0 1402,167.0" fill="#8c8c8c"/><polygon points="1394.0,488.5 1410.0,488.5 1402,501.5" fill="#8c8c8c"/>
<polygon points="176.5,522.0 176.5,538.0 163.5,530" fill="#8c8c8c"/><polygon points="1361.5,522.0 1361.5,538.0 1374.5,530" fill="#8c8c8c"/>
<polygon points="1446.5,360.0 1446.5,376.0 1433.5,368" fill="#8c8c8c"/><polygon points="1851.5,360.0 1851.5,376.0 1864.5,368" fill="#8c8c8c"/>
<polygon points="1125.5,710.0 1141.5,710.0 1133.5,697.0" fill="#8c8c8c"/><polygon points="1125.5,879.5 1141.5,879.5 1133.5,892.5" fill="#8c8c8c"/>
<polygon points="1182.5,878.0 1182.5,894.0 1169.5,886" fill="#8c8c8c"/><polygon points="1853.5,878.0 1853.5,894.0 1866.5,886" fill="#8c8c8c"/>
</svg>
<div class="trk" style="left:1392px;top:190px;width:20px;height:289px"></div>
<div class="thb" style="left:1392px;top:390px;width:20px;height:48px"></div>
<div class="trk" style="left:186px;top:520px;width:1166px;height:20px"></div>
<div class="thb" style="left:186px;top:520px;width:522px;height:20px"></div>
<div class="hl" style="left:0;top:550px;width:1424px"></div>
<div class="hl" style="left:0;top:636px;width:1855px"></div>
<div class="vl" style="left:1422.500px;top:157px;height:480px;width:2px;background:#4c4c4c"></div>
<div class="a m" style="left:6px;top:553px;color:#e6e6e6">rbx=0</div>
<div class="a m" style="left:6px;top:607px;color:#e6e6e6">FUK1:00007FF79B6174E0 re2.exe:$274E0 #38E0 &lt;EntryPoint&gt;</div>
<div class="a" style="left:1426px;top:158px;width:440px;height:38px;border:1px solid #2e2e32;border-radius:3px"></div>
<div class="a" style="left:1636px;top:166px;font-size:15.500px;line-height:22px;color:#e8e8e8;white-space:pre;font-family:'DejaVu Sans Mono','Liberation Mono','Noto Sans CJK SC',monospace">隐藏FPU</div>
<div class="a" style="left:1496px;top:208px;width:155px;height:16.500px;background:#404040"></div>
<div class="a m" style="left:1436px;top:206px;color:#a292fa">RAX</div>
<div class="a m im" style="left:1497px;top:206px;-webkit-text-stroke-color:#404040">00007FF79B6174E0</div>
<div class="a m" style="left:1700px;top:206px;color:#fa5a90">&lt;re2.EntryPoint&gt;</div>
<div class="a m" style="left:1436px;top:222px;color:#a292fa">RBX</div>
<div class="a m im" style="left:1497px;top:222px">0000000000000000</div>
<div class="a m" style="left:1436px;top:238px;color:#a292fa">RCX</div>
<div class="a m im" style="left:1497px;top:238px">0000003EDFAC9000</div>
<div class="a m" style="left:1436px;top:254px;color:#a292fa">RDX</div>
<div class="a m im" style="left:1497px;top:254px">00007FF79B6174E0</div>
<div class="a m" style="left:1700px;top:254px;color:#fa5a90">&lt;re2.EntryPoint&gt;</div>
<div class="a m" style="left:1436px;top:270px;color:#a292fa">RBP</div>
<div class="a m wh" style="left:1497px;top:270px">0000000000000000</div>
<div class="a m" style="left:1436px;top:286px;color:#a292fa">RSP</div>
<div class="a m im" style="left:1497px;top:286px">0000003EDFCFFDA8</div>
<div class="a m" style="left:1700px;top:286px;color:#fa5a90">L"<span style="-webkit-text-stroke-width:0">瀴噁翿</span>"</div>
<div class="a m" style="left:1436px;top:302px;color:#a292fa">RSI</div>
<div class="a m im" style="left:1497px;top:302px">0000000000000000</div>
<div class="a m" style="left:1436px;top:318px;color:#a292fa">RDI</div>
<div class="a m im" style="left:1497px;top:318px">0000000000000000</div>
<div class="a" style="left:1436px;top:237px;width:30px;height:3px;background:#9aee3c"></div>
<div class="a" style="left:1436px;top:301px;width:30px;height:3px;background:#f04848"></div>
<div class="trk" style="left:1456px;top:358px;width:388px;height:20px"></div>
<div class="thb" style="left:1456px;top:358px;width:86px;height:20px"></div>
<div class="hl" style="left:1424px;top:386px;width:431px"></div>
<div class="a" style="left:1436px;top:402px;height:26px;width:122px;overflow:hidden;"><div class="a ui" style="left:0px;top:1px;line-height:26px;color:#e4e4e4;font-size:18px">默认</div><svg class="a" style="left:45.0px;top:0;overflow:visible" width="126.0" height="26"><text x="1.300" y="19.5" textLength="123.4" lengthAdjust="spacingAndGlyphs" font-family="Liberation Serif,serif" font-size="18" fill="#e4e4e4" stroke="#212121" stroke-width="0.18" xml:space="preserve">(x64 fastcall)</text></svg></div>
<div class="a" style="left:1604px;top:390px;width:170px;height:52px;background:#323232;border-radius:4px"></div>
<div class="a" style="left:1649px;top:402px;height:26px;width:11.0px;"><svg class="a" style="left:0.0px;top:0;overflow:visible" width="9.0" height="26"><text x="1.300" y="19.5" textLength="6.4" lengthAdjust="spacingAndGlyphs" font-family="Liberation Serif,serif" font-size="18" fill="#e4e4e4" stroke="#323232" stroke-width="0.18" xml:space="preserve">5</text></svg></div>
<svg class="a" style="left:0;top:0;pointer-events:none" width="1855" height="973"><polygon points="1573.75,411.5 1588.25,411.5 1581,420.5" fill="#8c8c8c"/><polygon points="1613.75,411.5 1628.25,411.5 1621,420.5" fill="#8c8c8c"/><polygon points="1751.75,420.5 1766.25,420.5 1759,411.5" fill="#8c8c8c"/></svg>
<div class="a" style="left:1782px;top:398px;width:32px;height:32px;border:2px solid #787878;border-radius:3px;background:#212121"></div>
<div class="a" style="left:1826px;top:402px;height:26px;width:38px;"><div class="a ui" style="left:0px;top:1px;line-height:26px;color:#e4e4e4;font-size:18px">解锁</div></div>
<div class="a" style="left:1426px;top:446px;width:430px;height:18px;background:#3c3c3c"></div>
<div class="a m" style="left:1434px;top:445px;color:#e6e6e6;-webkit-text-stroke-color:#3c3c3c">1: rcx 0000003EDFAC9000</div>
<div class="a m" style="left:1434px;top:463px;color:#e6e6e6">2: rdx 00007FF79B6174E0 &lt;re2.EntryPoint&gt;</div>
<div class="a m" style="left:1434px;top:481px;color:#e6e6e6">3: r8 0000003EDFAC9000</div>
<div class="a m" style="left:1434px;top:499px;color:#e6e6e6">4: r9 00007FF79B6174E0 &lt;re2.EntryPoint&gt;</div>
<div class="a m" style="left:1434px;top:517px;color:#e6e6e6">5: [rsp+28] 0000000000000000</div>
<div class="tab sel" style="left:0px;width:148px;top:640px;height:44px">
<svg class="a" style="left:18px;top:10px;overflow:visible" width="24" height="24"><rect x="4" y="1" width="19" height="14" fill="#d4d8dc" stroke="#8a8e94" stroke-width="0.8"/><g stroke="#a8acb2" stroke-width="1"><line x1="9" y1="1" x2="9" y2="15"/><line x1="14" y1="1" x2="14" y2="15"/><line x1="19" y1="1" x2="19" y2="15"/></g><rect x="0" y="5" width="5" height="10" fill="#e8b020" stroke="#8a6a10" stroke-width="0.6"/><rect x="1" y="6.500" width="3" height="3" fill="#4aa0e0"/><rect x="0" y="15" width="23" height="2.500" fill="#3a3a3a"/><circle cx="5" cy="18" r="2.600" fill="#1a1a1a"/><circle cx="18" cy="18" r="2.600" fill="#1a1a1a"/></svg>
<div class="a" style="left:63px;top:7px;height:26px;width:56.0px;"><div class="a ui" style="left:0px;top:1px;line-height:26px;color:#8c9ef5;font-size:18px">内存</div><svg class="a" style="left:45.0px;top:0;overflow:visible" width="9.0" height="26"><text x="1.300" y="19.5" textLength="6.4" lengthAdjust="spacingAndGlyphs" font-family="Liberation Serif,serif" font-size="18" fill="#8c9ef5" stroke="#404040" stroke-width="0.18" xml:space="preserve">1</text></svg></div>
</div>
<div class="tab" style="left:152px;width:150px;top:640px;height:42px">
<svg class="a" style="left:20px;top:10px;overflow:visible" width="24" height="24"><rect x="4" y="1" width="19" height="14" fill="#d4d8dc" stroke="#8a8e94" stroke-width="0.8"/><g stroke="#a8acb2" stroke-width="1"><line x1="9" y1="1" x2="9" y2="15"/><line x1="14" y1="1" x2="14" y2="15"/><line x1="19" y1="1" x2="19" y2="15"/></g><rect x="0" y="5" width="5" height="10" fill="#e8b020" stroke="#8a6a10" stroke-width="0.6"/><rect x="1" y="6.500" width="3" height="3" fill="#4aa0e0"/><rect x="0" y="15" width="23" height="2.500" fill="#3a3a3a"/><circle cx="5" cy="18" r="2.600" fill="#1a1a1a"/><circle cx="18" cy="18" r="2.600" fill="#1a1a1a"/></svg>
<div class="a" style="left:65px;top:7px;height:26px;width:56.0px;"><div class="a ui" style="left:0px;top:1px;line-height:26px;color:#d6d6d6;font-size:18px">内存</div><svg class="a" style="left:45.0px;top:0;overflow:visible" width="9.0" height="26"><text x="1.300" y="19.5" textLength="6.4" lengthAdjust="spacingAndGlyphs" font-family="Liberation Serif,serif" font-size="18" fill="#d6d6d6" stroke="#2e2e2e" stroke-width="0.18" xml:space="preserve">2</text></svg></div>
</div>
<div class="tab" style="left:306px;width:150px;top:640px;height:42px">
<svg class="a" style="left:20px;top:10px;overflow:visible" width="24" height="24"><rect x="4" y="1" width="19" height="14" fill="#d4d8dc" stroke="#8a8e94" stroke-width="0.8"/><g stroke="#a8acb2" stroke-width="1"><line x1="9" y1="1" x2="9" y2="15"/><line x1="14" y1="1" x2="14" y2="15"/><line x1="19" y1="1" x2="19" y2="15"/></g><rect x="0" y="5" width="5" height="10" fill="#e8b020" stroke="#8a6a10" stroke-width="0.6"/><rect x="1" y="6.500" width="3" height="3" fill="#4aa0e0"/><rect x="0" y="15" width="23" height="2.500" fill="#3a3a3a"/><circle cx="5" cy="18" r="2.600" fill="#1a1a1a"/><circle cx="18" cy="18" r="2.600" fill="#1a1a1a"/></svg>
<div class="a" style="left:65px;top:7px;height:26px;width:56.0px;"><div class="a ui" style="left:0px;top:1px;line-height:26px;color:#d6d6d6;font-size:18px">内存</div><svg class="a" style="left:45.0px;top:0;overflow:visible" width="9.0" height="26"><text x="1.300" y="19.5" textLength="6.4" lengthAdjust="spacingAndGlyphs" font-family="Liberation Serif,serif" font-size="18" fill="#d6d6d6" stroke="#2e2e2e" stroke-width="0.18" xml:space="preserve">3</text></svg></div>
</div>
<div class="tab" style="left:460px;width:150px;top:640px;height:42px">
<svg class="a" style="left:20px;top:10px;overflow:visible" width="24" height="24"><rect x="4" y="1" width="19" height="14" fill="#d4d8dc" stroke="#8a8e94" stroke-width="0.8"/><g stroke="#a8acb2" stroke-width="1"><line x1="9" y1="1" x2="9" y2="15"/><line x1="14" y1="1" x2="14" y2="15"/><line x1="19" y1="1" x2="19" y2="15"/></g><rect x="0" y="5" width="5" height="10" fill="#e8b020" stroke="#8a6a10" stroke-width="0.6"/><rect x="1" y="6.500" width="3" height="3" fill="#4aa0e0"/><rect x="0" y="15" width="23" height="2.500" fill="#3a3a3a"/><circle cx="5" cy="18" r="2.600" fill="#1a1a1a"/><circle cx="18" cy="18" r="2.600" fill="#1a1a1a"/></svg>
<div class="a" style="left:65px;top:7px;height:26px;width:56.0px;"><div class="a ui" style="left:0px;top:1px;line-height:26px;color:#d6d6d6;font-size:18px">内存</div><svg class="a" style="left:45.0px;top:0;overflow:visible" width="9.0" height="26"><text x="1.300" y="19.5" textLength="6.4" lengthAdjust="spacingAndGlyphs" font-family="Liberation Serif,serif" font-size="18" fill="#d6d6d6" stroke="#2e2e2e" stroke-width="0.18" xml:space="preserve">4</text></svg></div>
</div>
<div class="tab" style="left:614px;width:150px;top:640px;height:42px">
<svg class="a" style="left:20px;top:10px;overflow:visible" width="24" height="24"><rect x="4" y="1" width="19" height="14" fill="#d4d8dc" stroke="#8a8e94" stroke-width="0.8"/><g stroke="#a8acb2" stroke-width="1"><line x1="9" y1="1" x2="9" y2="15"/><line x1="14" y1="1" x2="14" y2="15"/><line x1="19" y1="1" x2="19" y2="15"/></g><rect x="0" y="5" width="5" height="10" fill="#e8b020" stroke="#8a6a10" stroke-width="0.6"/><rect x="1" y="6.500" width="3" height="3" fill="#4aa0e0"/><rect x="0" y="15" width="23" height="2.500" fill="#3a3a3a"/><circle cx="5" cy="18" r="2.600" fill="#1a1a1a"/><circle cx="18" cy="18" r="2.600" fill="#1a1a1a"/></svg>
<div class="a" style="left:65px;top:7px;height:26px;width:56.0px;"><div class="a ui" style="left:0px;top:1px;line-height:26px;color:#d6d6d6;font-size:18px">内存</div><svg class="a" style="left:45.0px;top:0;overflow:visible" width="9.0" height="26"><text x="1.300" y="19.5" textLength="6.4" lengthAdjust="spacingAndGlyphs" font-family="Liberation Serif,serif" font-size="18" fill="#d6d6d6" stroke="#2e2e2e" stroke-width="0.18" xml:space="preserve">5</text></svg></div>
</div>
<div class="tab" style="left:768px;width:150px;top:640px;height:42px">
<svg class="a" style="left:22px;top:8px;overflow:visible" width="24" height="24"><path d="M1 1 L6 5 H16 L21 1 L21.500 11 C21.500 17 17 20 11 20 C5 20 0.500 17 0.500 11 Z" fill="#c48a4a" stroke="#7a5220" stroke-width="0.800"/><path d="M6 12 C7 18 15 18 16 12 C14 10 8 10 6 12 Z" fill="#ead8bc"/><circle cx="7" cy="9.500" r="1.300" fill="#2a1a0a"/><circle cx="15" cy="9.500" r="1.300" fill="#2a1a0a"/><rect x="10" y="12" width="2" height="1.500" fill="#3a2a1a"/><path d="M3 3.500 L6 6 L3.500 7 Z M19 3.500 L16 6 L18.500 7 Z" fill="#e8c8a0"/></svg>
<div class="a" style="left:65px;top:7px;height:26px;width:56.0px;"><div class="a ui" style="left:0px;top:1px;line-height:26px;color:#d6d6d6;font-size:18px">监视</div><svg class="a" style="left:45.0px;top:0;overflow:visible" width="9.0" height="26"><text x="1.300" y="19.5" textLength="6.4" lengthAdjust="spacingAndGlyphs" font-family="Liberation Serif,serif" font-size="18" fill="#d6d6d6" stroke="#2e2e2e" stroke-width="0.18" xml:space="preserve">1</text></svg></div>
</div>
<div class="tab" style="left:922px;width:168px;top:640px;height:42px">
<svg class="a" style="left:20px;top:10px;overflow:visible" width="24" height="24"><path d="M1.500 1 V17 M22.500 1 V17" stroke="#151515" stroke-width="1.500"/><text x="4.500" y="13" font-family="Liberation Serif,serif" font-style="italic" font-weight="bold" font-size="12" fill="#6e1212">x</text><rect x="13.500" y="7" width="6" height="1.500" fill="#151515"/><rect x="13.500" y="10.500" width="6" height="1.500" fill="#151515"/></svg>
<div class="a" style="left:65px;top:7px;height:26px;width:74px;"><div class="a ui" style="left:0px;top:1px;line-height:26px;color:#d6d6d6;font-size:18px">局部变量</div></div>
</div>
<div class="a" style="left:1097px;top:643px;width:28px;height:37px;border:2px solid #3e3e3e;border-radius:4px;background:#1e1e1e"></div>
<div class="a" style="left:1127px;top:643px;width:28px;height:37px;border:2px solid #3e3e3e;border-radius:4px;background:#1e1e1e"></div>
<svg class="a" style="left:0;top:0;pointer-events:none" width="1855" height="973"><polygon points="1114.25,655.0 1114.25,668.0 1105.75,661.5" fill="#8a8a8a"/><polygon points="1135.75,655.0 1135.75,668.0 1144.25,661.5" fill="#e8e8e8"/></svg>
<div class="hdr" style="left:2px;width:172px">地址</div>
<div class="hdr" style="left:178px;width:480px">十六进制</div>
<div class="hdr" style="left:662px;width:174px"><span style="font-family:'DejaVu Sans Mono',monospace;font-size:15px">ASCII</span></div>
<div class="hdr" style="left:840px;width:275px"></div>
<div class="a" style="left:0;top:711px;width:1120px;height:190px;overflow:hidden">
<div class="a" style="left:176px;top:1px;width:30px;height:17px;background:#404040"></div>
<div class="a" style="left:669px;top:1px;width:10px;height:17px;background:#404040"></div>
<div class="a m" style="left:8px;top:0px;color:#b2b2b2">00007FFF56511000</div>
<div class="a m" style="left:183.5px;top:0px;color:#e6e6e6">CC</div>
<div class="a m" style="left:213.5px;top:0px;color:#e6e6e6">CC</div>
<div class="a m" style="left:243.5px;top:0px;color:#e6e6e6">CC</div>
<div class="a m" style="left:273.5px;top:0px;color:#e6e6e6">CC</div>
<div class="a m" style="left:303.5px;top:0px;color:#e6e6e6">CC</div>
<div class="a m" style="left:333.5px;top:0px;color:#e6e6e6">CC</div>
<div class="a m" style="left:363.5px;top:0px;color:#e6e6e6">CC</div>
<div class="a m" style="left:393.5px;top:0px;color:#e6e6e6">CC</div>
<div class="a m" style="left:423.5px;top:0px;color:#e6e6e6">CC</div>
<div class="a m" style="left:453.5px;top:0px;color:#e6e6e6">CC</div>
<div class="a m" style="left:483.5px;top:0px;color:#e6e6e6">CC</div>
<div class="a m" style="left:513.5px;top:0px;color:#e6e6e6">CC</div>
<div class="a m" style="left:543.5px;top:0px;color:#e6e6e6">CC</div>
<div class="a m" style="left:573.5px;top:0px;color:#e6e6e6">CC</div>
<div class="a m" style="left:603.5px;top:0px;color:#e6e6e6">CC</div>
<div class="a m" style="left:633.5px;top:0px;color:#e6e6e6">CC</div>
<div class="a m" style="left:670px;top:0px;color:#e6e6e6;letter-spacing:0.400px">ÌÌÌÌÌÌÌÌÌÌÌÌÌÌÌÌ</div>
<div class="a m" style="left:8px;top:18px;color:#b09cff">00007FFF56511010</div>
<div class="a m" style="left:183.5px;top:18px;color:#e6e6e6">48</div>
<div class="a m" style="left:213.5px;top:18px;color:#e6e6e6">89</div>
<div class="a m" style="left:243.5px;top:18px;color:#e6e6e6">5C</div>
<div class="a m" style="left:273.5px;top:18px;color:#e6e6e6">24</div>
<div class="a m" style="left:303.5px;top:18px;color:#e6e6e6">10</div>
<div class="a m" style="left:333.5px;top:18px;color:#e6e6e6">48</div>
<div class="a m" style="left:363.5px;top:18px;color:#e6e6e6">89</div>
<div class="a m" style="left:393.5px;top:18px;color:#e6e6e6">74</div>
<div class="a m" style="left:423.5px;top:18px;color:#e6e6e6">24</div>
<div class="a m" style="left:453.5px;top:18px;color:#e6e6e6">18</div>
<div class="a m" style="left:483.5px;top:18px;color:#e6e6e6">57</div>
<div class="a m" style="left:513.5px;top:18px;color:#e6e6e6">41</div>
<div class="a m" style="left:543.5px;top:18px;color:#e6e6e6">56</div>
<div class="a m" style="left:573.5px;top:18px;color:#e6e6e6">41</div>
<div class="a m" style="left:603.5px;top:18px;color:#e6e6e6">57</div>
<div class="a m" style="left:633.5px;top:18px;color:#e6e6e6">48</div>
<div class="a m" style="left:670px;top:18px;color:#e6e6e6;letter-spacing:0.400px">H.\$.H.t$.WAVAWH</div>
<div class="a m" style="left:8px;top:36px;color:#b2b2b2">00007FFF56511020</div>
<div class="a m" style="left:183.5px;top:36px;color:#e6e6e6">81</div>
<div class="a m" style="left:213.5px;top:36px;color:#e6e6e6">EC</div>
<div class="a m" style="left:243.5px;top:36px;color:#e6e6e6">80</div>
<div class="a m" style="left:273.5px;top:36px;color:#e6e6e6">00</div>
<div class="a m" style="left:303.5px;top:36px;color:#e6e6e6">00</div>
<div class="a m" style="left:333.5px;top:36px;color:#e6e6e6">00</div>
<div class="a m" style="left:363.5px;top:36px;color:#e6e6e6">48</div>
<div class="a m" style="left:393.5px;top:36px;color:#e6e6e6">8B</div>
<div class="a m" style="left:423.5px;top:36px;color:#e6e6e6">05</div>
<div class="a m" style="left:453.5px;top:36px;color:#e6e6e6">E3</div>
<div class="a m" style="left:483.5px;top:36px;color:#e6e6e6">34</div>
<div class="a m" style="left:513.5px;top:36px;color:#e6e6e6">18</div>
<div class="a m" style="left:543.5px;top:36px;color:#e6e6e6">00</div>
<div class="a m" style="left:573.5px;top:36px;color:#e6e6e6">48</div>
<div class="a m" style="left:603.5px;top:36px;color:#e6e6e6">33</div>
<div class="a m" style="left:633.5px;top:36px;color:#e6e6e6">C4</div>
<div class="a m" style="left:670px;top:36px;color:#e6e6e6;letter-spacing:0.400px">.ì....H..ã4..H3Ä</div>
<div class="a m" style="left:8px;top:54px;color:#b2b2b2">00007FFF56511030</div>
<div class="a m" style="left:183.5px;top:54px;color:#e6e6e6">48</div>
<div class="a m" style="left:213.5px;top:54px;color:#e6e6e6">89</div>
<div class="a m" style="left:243.5px;top:54px;color:#e6e6e6">44</div>
<div class="a m" style="left:273.5px;top:54px;color:#e6e6e6">24</div>
<div class="a m" style="left:303.5px;top:54px;color:#e6e6e6">70</div>
<div class="a m" style="left:333.5px;top:54px;color:#e6e6e6">4D</div>
<div class="a m" style="left:363.5px;top:54px;color:#e6e6e6">8B</div>
<div class="a m" style="left:393.5px;top:54px;color:#e6e6e6">F9</div>
<div class="a m" style="left:423.5px;top:54px;color:#e6e6e6">41</div>
<div class="a m" style="left:453.5px;top:54px;color:#e6e6e6">8B</div>
<div class="a m" style="left:483.5px;top:54px;color:#e6e6e6">F8</div>
<div class="a m" style="left:513.5px;top:54px;color:#e6e6e6">48</div>
<div class="a m" style="left:543.5px;top:54px;color:#e6e6e6">8B</div>
<div class="a m" style="left:573.5px;top:54px;color:#e6e6e6">C1</div>
<div class="a m" style="left:603.5px;top:54px;color:#e6e6e6">85</div>
<div class="a m" style="left:633.5px;top:54px;color:#e6e6e6">D2</div>
<div class="a m" style="left:670px;top:54px;color:#e6e6e6;letter-spacing:0.400px">H.D$pM.ùA.øH.Á.Ò</div>
<div class="a m" style="left:8px;top:72px;color:#b2b2b2">00007FFF56511040</div>
<div class="a m" style="left:183.5px;top:72px;color:#e6e6e6">0F</div>
<div class="a m" style="left:213.5px;top:72px;color:#e6e6e6">84</div>
<div class="a m" style="left:243.5px;top:72px;color:#e6e6e6">61</div>
<div class="a m" style="left:273.5px;top:72px;color:#e6e6e6">64</div>
<div class="a m" style="left:303.5px;top:72px;color:#e6e6e6">0A</div>
<div class="a m" style="left:333.5px;top:72px;color:#e6e6e6">00</div>
<div class="a m" style="left:363.5px;top:72px;color:#e6e6e6">83</div>
<div class="a m" style="left:393.5px;top:72px;color:#e6e6e6">FA</div>
<div class="a m" style="left:423.5px;top:72px;color:#e6e6e6">0A</div>
<div class="a m" style="left:453.5px;top:72px;color:#e6e6e6">0F</div>
<div class="a m" style="left:483.5px;top:72px;color:#e6e6e6">85</div>
<div class="a m" style="left:513.5px;top:72px;color:#e6e6e6">15</div>
<div class="a m" style="left:543.5px;top:72px;color:#e6e6e6">64</div>
<div class="a m" style="left:573.5px;top:72px;color:#e6e6e6">0A</div>
<div class="a m" style="left:603.5px;top:72px;color:#e6e6e6">00</div>
<div class="a m" style="left:633.5px;top:72px;color:#e6e6e6">45</div>
<div class="a m" style="left:670px;top:72px;color:#e6e6e6;letter-spacing:0.400px">..ad...ú....d..E</div>
<div class="a m" style="left:8px;top:90px;color:#b2b2b2">00007FFF56511050</div>
<div class="a m" style="left:183.5px;top:90px;color:#e6e6e6">33</div>
<div class="a m" style="left:213.5px;top:90px;color:#e6e6e6">C9</div>
<div class="a m" style="left:243.5px;top:90px;color:#e6e6e6">45</div>
<div class="a m" style="left:273.5px;top:90px;color:#e6e6e6">33</div>
<div class="a m" style="left:303.5px;top:90px;color:#e6e6e6">D2</div>
<div class="a m" style="left:333.5px;top:90px;color:#e6e6e6">4C</div>
<div class="a m" style="left:363.5px;top:90px;color:#e6e6e6">8D</div>
<div class="a m" style="left:393.5px;top:90px;color:#e6e6e6">74</div>
<div class="a m" style="left:423.5px;top:90px;color:#e6e6e6">24</div>
<div class="a m" style="left:453.5px;top:90px;color:#e6e6e6">61</div>
<div class="a m" style="left:483.5px;top:90px;color:#e6e6e6">48</div>
<div class="a m" style="left:513.5px;top:90px;color:#e6e6e6">8B</div>
<div class="a m" style="left:543.5px;top:90px;color:#e6e6e6">00</div>
<div class="a m" style="left:573.5px;top:90px;color:#e6e6e6">4C</div>
<div class="a m" style="left:603.5px;top:90px;color:#e6e6e6">8D</div>
<div class="a m" style="left:633.5px;top:90px;color:#e6e6e6">1D</div>
<div class="a m" style="left:670px;top:90px;color:#e6e6e6;letter-spacing:0.400px">3ÉE3ÒL.t$aH..L..</div>
<div class="a m" style="left:8px;top:108px;color:#b2b2b2">00007FFF56511060</div>
<div class="a m" style="left:183.5px;top:108px;color:#e6e6e6">C4</div>
<div class="a m" style="left:213.5px;top:108px;color:#e6e6e6">5A</div>
<div class="a m" style="left:243.5px;top:108px;color:#e6e6e6">12</div>
<div class="a m" style="left:273.5px;top:108px;color:#e6e6e6">00</div>
<div class="a m" style="left:303.5px;top:108px;color:#e6e6e6">45</div>
<div class="a m" style="left:333.5px;top:108px;color:#e6e6e6">85</div>
<div class="a m" style="left:363.5px;top:108px;color:#e6e6e6">C9</div>
<div class="a m" style="left:393.5px;top:108px;color:#e6e6e6">0F</div>
<div class="a m" style="left:423.5px;top:108px;color:#e6e6e6">85</div>
<div class="a m" style="left:453.5px;top:108px;color:#e6e6e6">44</div>
<div class="a m" style="left:483.5px;top:108px;color:#e6e6e6">64</div>
<div class="a m" style="left:513.5px;top:108px;color:#e6e6e6">0A</div>
<div class="a m" style="left:543.5px;top:108px;color:#e6e6e6">00</div>
<div class="a m" style="left:573.5px;top:108px;color:#e6e6e6">44</div>
<div class="a m" style="left:603.5px;top:108px;color:#e6e6e6">8B</div>
<div class="a m" style="left:633.5px;top:108px;color:#e6e6e6">C2</div>
<div class="a m" style="left:670px;top:108px;color:#e6e6e6;letter-spacing:0.400px">ÄZ..E.É..Dd..D.Â</div>
<div class="a m" style="left:8px;top:126px;color:#b2b2b2">00007FFF56511070</div>
<div class="a m" style="left:183.5px;top:126px;color:#e6e6e6">33</div>
<div class="a m" style="left:213.5px;top:126px;color:#e6e6e6">D2</div>
<div class="a m" style="left:243.5px;top:126px;color:#e6e6e6">49</div>
<div class="a m" style="left:273.5px;top:126px;color:#e6e6e6">F7</div>
<div class="a m" style="left:303.5px;top:126px;color:#e6e6e6">F0</div>
<div class="a m" style="left:333.5px;top:126px;color:#e6e6e6">49</div>
<div class="a m" style="left:363.5px;top:126px;color:#e6e6e6">FF</div>
<div class="a m" style="left:393.5px;top:126px;color:#e6e6e6">CE</div>
<div class="a m" style="left:423.5px;top:126px;color:#e6e6e6">8B</div>
<div class="a m" style="left:453.5px;top:126px;color:#e6e6e6">CA</div>
<div class="a m" style="left:483.5px;top:126px;color:#e6e6e6">42</div>
<div class="a m" style="left:513.5px;top:126px;color:#e6e6e6">8A</div>
<div class="a m" style="left:543.5px;top:126px;color:#e6e6e6">0C</div>
<div class="a m" style="left:573.5px;top:126px;color:#e6e6e6">19</div>
<div class="a m" style="left:603.5px;top:126px;color:#e6e6e6">41</div>
<div class="a m" style="left:633.5px;top:126px;color:#e6e6e6">88</div>
<div class="a m" style="left:670px;top:126px;color:#e6e6e6;letter-spacing:0.400px">3ÒI÷ðIÿÎ.ÊB...A.</div>
<div class="a m" style="left:8px;top:144px;color:#b2b2b2">00007FFF56511080</div>
<div class="a m" style="left:183.5px;top:144px;color:#e6e6e6">0E</div>
<div class="a m" style="left:213.5px;top:144px;color:#e6e6e6">48</div>
<div class="a m" style="left:243.5px;top:144px;color:#e6e6e6">85</div>
<div class="a m" style="left:273.5px;top:144px;color:#e6e6e6">C0</div>
<div class="a m" style="left:303.5px;top:144px;color:#e6e6e6">75</div>
<div class="a m" style="left:333.5px;top:144px;color:#e6e6e6">EA</div>
<div class="a m" style="left:363.5px;top:144px;color:#e6e6e6">48</div>
<div class="a m" style="left:393.5px;top:144px;color:#e6e6e6">8D</div>
<div class="a m" style="left:423.5px;top:144px;color:#e6e6e6">74</div>
<div class="a m" style="left:453.5px;top:144px;color:#e6e6e6">24</div>
<div class="a m" style="left:483.5px;top:144px;color:#e6e6e6">61</div>
<div class="a m" style="left:513.5px;top:144px;color:#e6e6e6">41</div>
<div class="a m" style="left:543.5px;top:144px;color:#e6e6e6">2B</div>
<div class="a m" style="left:573.5px;top:144px;color:#e6e6e6">F6</div>
<div class="a m" style="left:603.5px;top:144px;color:#e6e6e6">85</div>
<div class="a m" style="left:633.5px;top:144px;color:#e6e6e6">FF</div>
<div class="a m" style="left:670px;top:144px;color:#e6e6e6;letter-spacing:0.400px">.H.ÀuêH.t$aA+ö.ÿ</div>
<div class="a m" style="left:8px;top:162px;color:#b2b2b2">00007FFF56511090</div>
<div class="a m" style="left:183.5px;top:162px;color:#e6e6e6">0F</div>
<div class="a m" style="left:213.5px;top:162px;color:#e6e6e6">88</div>
<div class="a m" style="left:243.5px;top:162px;color:#e6e6e6">3E</div>
<div class="a m" style="left:273.5px;top:162px;color:#e6e6e6">64</div>
<div class="a m" style="left:303.5px;top:162px;color:#e6e6e6">0A</div>
<div class="a m" style="left:333.5px;top:162px;color:#e6e6e6">00</div>
<div class="a m" style="left:363.5px;top:162px;color:#e6e6e6">3B</div>
<div class="a m" style="left:393.5px;top:162px;color:#e6e6e6">F7</div>
<div class="a m" style="left:423.5px;top:162px;color:#e6e6e6">0F</div>
<div class="a m" style="left:453.5px;top:162px;color:#e6e6e6">8F</div>
<div class="a m" style="left:483.5px;top:162px;color:#e6e6e6">5B</div>
<div class="a m" style="left:513.5px;top:162px;color:#e6e6e6">64</div>
<div class="a m" style="left:543.5px;top:162px;color:#e6e6e6">0A</div>
<div class="a m" style="left:573.5px;top:162px;color:#e6e6e6">00</div>
<div class="a m" style="left:603.5px;top:162px;color:#e6e6e6">44</div>
<div class="a m" style="left:633.5px;top:162px;color:#e6e6e6">8B</div>
<div class="a m" style="left:670px;top:162px;color:#e6e6e6;letter-spacing:0.400px">..&gt;d..;÷..[d..D.</div>
<div class="a m" style="left:8px;top:180px;color:#b2b2b2">00007FFF565110A0</div>
<div class="a m" style="left:183.5px;top:180px;color:#e6e6e6">C6</div>
<div class="a m" style="left:213.5px;top:180px;color:#e6e6e6">49</div>
<div class="a m" style="left:243.5px;top:180px;color:#e6e6e6">8B</div>
<div class="a m" style="left:273.5px;top:180px;color:#e6e6e6">D6</div>
<div class="a m" style="left:303.5px;top:180px;color:#e6e6e6">49</div>
<div class="a m" style="left:333.5px;top:180px;color:#e6e6e6">8B</div>
<div class="a m" style="left:363.5px;top:180px;color:#e6e6e6">CE</div>
<div class="a m" style="left:393.5px;top:180px;color:#e6e6e6">E8</div>
<div class="a m" style="left:423.5px;top:180px;color:#e6e6e6">94</div>
<div class="a m" style="left:453.5px;top:180px;color:#e6e6e6">2C</div>
<div class="a m" style="left:483.5px;top:180px;color:#e6e6e6">0A</div>
<div class="a m" style="left:513.5px;top:180px;color:#e6e6e6">00</div>
<div class="a m" style="left:543.5px;top:180px;color:#e6e6e6">3B</div>
<div class="a m" style="left:573.5px;top:180px;color:#e6e6e6">F7</div>
<div class="a m" style="left:603.5px;top:180px;color:#e6e6e6">7D</div>
<div class="a m" style="left:633.5px;top:180px;color:#e6e6e6">05</div>
<div class="a m" style="left:670px;top:180px;color:#e6e6e6;letter-spacing:0.400px">ÆI.ÖI.Îè.,..;÷}.</div>
<div class="vl" style="left:174px;top:0;height:190px;width:1.600px;background:#747474"></div>
<div class="vl" style="left:295px;top:0;height:190px;width:1.600px;background:#747474"></div>
<div class="vl" style="left:415px;top:0;height:190px;width:1.600px;background:#747474"></div>
<div class="vl" style="left:535px;top:0;height:190px;width:1.600px;background:#747474"></div>
<div class="vl" style="left:659.5px;top:0;height:190px;width:1.600px;background:#747474"></div>
<div class="vl" style="left:835px;top:0;height:190px;width:1.600px;background:#747474"></div>
<div class="vl" style="left:1113px;top:0;height:190px;width:1.600px;background:#747474"></div>
</div>
<div class="trk" style="left:1124px;top:720px;width:20px;height:150px"></div>
<div class="thb" style="left:1124px;top:720px;width:20px;height:48px"></div>
<div class="vl" style="left:1155.500px;top:637px;height:268px;width:2px;background:#4c4c4c"></div>
<div class="a" style="left:1158px;top:640px;width:697px;height:228px;overflow:hidden">
<div class="a" style="left:2px;top:0;width:695px;height:18px;background:#404040"></div>
<div class="a m" style="left:10px;top:0px;color:#9cf040;-webkit-text-stroke-color:#404040">0000003EDFCFFDA8</div>
<div class="a m" style="left:354.500px;top:0px;color:#e6e6e6;-webkit-text-stroke-color:#404040">00007FFF56417034</div>
<div class="a m" style="left:528px;top:0px;color:#fa5a84;-webkit-text-stroke-color:#404040"><span style="-webkit-text-stroke-width:0">返回到</span> kernel32.00007FFF56417034 <span style="-webkit-text-stroke-width:0">来自</span> ???</div>
<div class="a m" style="left:10px;top:18px;color:#b2b2b2">0000003EDFCFFDB0</div>
<div class="a m" style="left:354.500px;top:18px;color:#e6e6e6">0000000000000000</div>
<div class="a m" style="left:10px;top:36px;color:#b2b2b2">0000003EDFCFFDB8</div>
<div class="a m" style="left:354.500px;top:36px;color:#e6e6e6">0000000000000000</div>
<div class="a m" style="left:10px;top:54px;color:#b2b2b2">0000003EDFCFFDC0</div>
<div class="a m" style="left:354.500px;top:54px;color:#e6e6e6">0000000000000000</div>
<div class="a m" style="left:10px;top:72px;color:#b2b2b2">0000003EDFCFFDC8</div>
<div class="a m" style="left:354.500px;top:72px;color:#e6e6e6">0000000000000000</div>
<div class="a m" style="left:10px;top:90px;color:#b2b2b2">0000003EDFCFFDD0</div>
<div class="a m" style="left:354.500px;top:90px;color:#e6e6e6">0000000000000000</div>
<div class="a m" style="left:10px;top:108px;color:#b2b2b2">0000003EDFCFFDD8</div>
<div class="a m" style="left:354.500px;top:108px;color:#e6e6e6">00007FFF56562651</div>
<div class="a m" style="left:528px;top:108px;color:#fa5a84"><span style="-webkit-text-stroke-width:0">返回到</span> ntdll.00007FFF56562651 <span style="-webkit-text-stroke-width:0">来自</span> ???</div>
<div class="a m" style="left:10px;top:126px;color:#b2b2b2">0000003EDFCFFDE0</div>
<div class="a m" style="left:354.500px;top:126px;color:#e6e6e6">0000000000000000</div>
<div class="a m" style="left:10px;top:144px;color:#b2b2b2">0000003EDFCFFDE8</div>
<div class="a m" style="left:354.500px;top:144px;color:#e6e6e6">0000000000000000</div>
<div class="a m" style="left:10px;top:162px;color:#b2b2b2">0000003EDFCFFDF0</div>
<div class="a m" style="left:354.500px;top:162px;color:#e6e6e6">0000000000000000</div>
<div class="a m" style="left:10px;top:180px;color:#b2b2b2">0000003EDFCFFDF8</div>
<div class="a m" style="left:354.500px;top:180px;color:#e6e6e6">0000000000000000</div>
<div class="a m" style="left:10px;top:198px;color:#b2b2b2">0000003EDFCFFE00</div>
<div class="a m" style="left:354.500px;top:198px;color:#e6e6e6">0000000000000000</div>
<div class="a m" style="left:10px;top:216px;color:#b2b2b2">0000003EDFCFFE08</div>
<div class="a m" style="left:354.500px;top:216px;color:#e6e6e6">0000000000000000</div>
<div class="vl" style="left:337.500px;top:0;height:228px;width:1.600px;background:#747474"></div>
<div class="vl" style="left:517.500px;top:0;height:228px;width:1.600px;background:#747474"></div>
<svg class="a" style="left:340px;top:0" width="16" height="228"><path d="M12 4 H4 V102 H12" fill="none" stroke="#f58a80" stroke-width="4"/><path d="M12 112 H4 V240" fill="none" stroke="#f58a80" stroke-width="4"/></svg>
</div>
<div class="trk" style="left:1192px;top:876px;width:652px;height:20px"></div>
<div class="thb" style="left:1192px;top:876px;width:164px;height:20px"></div>
<div class="a" style="left:-1px;top:922px;height:26px;width:47.0px;"><div class="a ui" style="left:0px;top:1px;line-height:26px;color:#e4e4e4;font-size:18px">命令</div><svg class="a" style="left:36.0px;top:0;overflow:visible" width="9.0" height="26"><text x="1.300" y="19.5" textLength="6.4" lengthAdjust="spacingAndGlyphs" font-family="Liberation Serif,serif" font-size="18" fill="#e4e4e4" stroke="#212121" stroke-width="0.18" xml:space="preserve">:</text></svg></div>
<div class="a" style="left:50px;top:918px;width:1654px;height:36px;background:#323232;border-radius:3px"></div>
<div class="a" style="left:56px;top:925px;font-size:15.500px;line-height:22px;color:#6e6e6e;white-space:pre;text-spacing-trim:space-all;font-feature-settings:'halt' 0,'chws' 0,'palt' 0;font-family:'Liberation Sans','Noto Sans CJK SC',sans-serif">命令使用逗号分隔<span style="margin-right:4px">（</span>像汇编语言<span style="margin-left:4px">）</span>：<span style="font-family:'Liberation Mono',monospace;font-size:16px;margin-left:1px">mov eax, ebx</span></div>
<div class="a" style="left:1718px;top:922px;height:26px;width:38px;"><div class="a ui" style="left:0px;top:1px;line-height:26px;color:#e4e4e4;font-size:18px">默认</div></div>
<div class="a" style="left:19px;top:969.5px;font-size:15.5px;line-height:20px;color:#c8c81e;white-space:pre;font-family:'Liberation Sans','Noto Sans CJK SC',sans-serif">已暂停</div>
</body></html>
